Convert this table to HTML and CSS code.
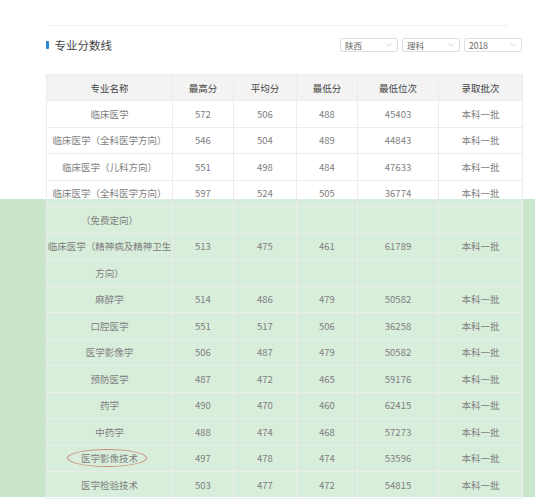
FILE: index.html
```html
<!DOCTYPE html>
<html lang="zh-CN">
<head>
<meta charset="utf-8">
<link rel="stylesheet" href="styles.css">
</head>
<body>
<div class="highlight"></div>
<div class="page">
  <div class="top-line"></div>
  <div class="bar">
    <div class="title"><span class="mark"></span>专业分数线</div>
    <div class="filters">
      <div class="select"><span>陕西</span><svg viewBox="0 0 8 5" class="chev"><path d="M0.5 0.5 L4 4 L7.5 0.5" fill="none" stroke="#c4c4c4" stroke-width="0.9"/></svg></div>
      <div class="select"><span>理科</span><svg viewBox="0 0 8 5" class="chev"><path d="M0.5 0.5 L4 4 L7.5 0.5" fill="none" stroke="#c4c4c4" stroke-width="0.9"/></svg></div>
      <div class="select"><span>2018</span><svg viewBox="0 0 8 5" class="chev"><path d="M0.5 0.5 L4 4 L7.5 0.5" fill="none" stroke="#c4c4c4" stroke-width="0.9"/></svg></div>
    </div>
  </div>
  <table class="scores">
    <colgroup>
      <col class="c1"><col class="c2"><col class="c3"><col class="c4"><col class="c5"><col class="c6">
    </colgroup>
    <thead>
      <tr><th>专业名称</th><th>最高分</th><th>平均分</th><th>最低分</th><th>最低位次</th><th>录取批次</th></tr>
    </thead>
    <tbody>
      <tr><td>临床医学</td><td>572</td><td>506</td><td>488</td><td>45403</td><td>本科一批</td></tr>
      <tr><td>临床医学（全科医学方向）</td><td>546</td><td>504</td><td>489</td><td>44843</td><td>本科一批</td></tr>
      <tr><td>临床医学（儿科方向）</td><td>551</td><td>498</td><td>484</td><td>47633</td><td>本科一批</td></tr>
      <tr><td>临床医学（全科医学方向）</td><td>597</td><td>524</td><td>505</td><td>36774</td><td>本科一批</td></tr>
      <tr><td>（免费定向）</td><td></td><td></td><td></td><td></td><td></td></tr>
      <tr><td>临床医学（精神病及精神卫生</td><td>513</td><td>475</td><td>461</td><td>61789</td><td>本科一批</td></tr>
      <tr><td>方向）</td><td></td><td></td><td></td><td></td><td></td></tr>
      <tr><td>麻醉学</td><td>514</td><td>486</td><td>479</td><td>50582</td><td>本科一批</td></tr>
      <tr><td>口腔医学</td><td>551</td><td>517</td><td>506</td><td>36258</td><td>本科一批</td></tr>
      <tr><td>医学影像学</td><td>506</td><td>487</td><td>479</td><td>50582</td><td>本科一批</td></tr>
      <tr><td>预防医学</td><td>487</td><td>472</td><td>465</td><td>59176</td><td>本科一批</td></tr>
      <tr><td>药学</td><td>490</td><td>470</td><td>460</td><td>62415</td><td>本科一批</td></tr>
      <tr><td>中药学</td><td>488</td><td>474</td><td>468</td><td>57273</td><td>本科一批</td></tr>
      <tr><td class="circled"><span class="ring"></span>医学影像技术</td><td>497</td><td>478</td><td>474</td><td>53596</td><td>本科一批</td></tr>
      <tr><td>医学检验技术</td><td>503</td><td>477</td><td>472</td><td>54815</td><td>本科一批</td></tr>
    </tbody>
  </table>
</div>
</body>
</html>
```

FILE: styles.css
```css
html, body {
  margin: 0;
  padding: 0;
  background: #ffffff;
}
body {
  position: relative;
  width: 535px;
  height: 500px;
  overflow: hidden;
  font-family: "Noto Sans CJK SC", "Noto Sans", sans-serif;
}
.highlight {
  position: absolute;
  left: 0;
  top: 199px;
  width: 535px;
  height: 298px;
  background: #c9e6cc;
  z-index: 0;
}
.page {
  position: relative;
  z-index: 1;
  margin-left: 46px;
  width: 476px;
  padding-top: 25px;
}
.top-line {
  width: 462px;
  border-top: 1px solid #f1f1f1;
}
.bar {
  margin-top: 12px;
  height: 14px;
  display: flex;
  align-items: center;
  justify-content: space-between;
}
.title {
  display: flex;
  align-items: center;
  font-size: 11.5px;
  color: #444;
  line-height: 14px;
}
.mark {
  display: inline-block;
  width: 2.5px;
  height: 8px;
  background: #2b86d6;
  border-radius: 1px;
  margin-right: 6px;
}
.filters {
  display: flex;
  gap: 4px;
}
.select {
  box-sizing: border-box;
  width: 58px;
  height: 14px;
  border: 1px solid #dedede;
  border-radius: 2px;
  display: flex;
  align-items: center;
  justify-content: space-between;
  padding: 0 5px 0 4px;
  font-size: 8.5px;
  color: #666;
  background: #fff;
}
.chev {
  width: 6px;
  height: 4px;
}
.scores {
  margin-top: 22px;
  width: 476px;
  border-collapse: collapse;
  table-layout: fixed;
  font-size: 9.5px;
}
.c1 { width: 126px; }
.c2 { width: 61px; }
.c3 { width: 63px; }
.c4 { width: 61px; }
.c5 { width: 81px; }
.c6 { width: 84px; }
.scores tr {
  height: 26.5px;
}
.scores thead tr {
  height: 26px;
}
.scores th, .scores td {
  border: 1px solid #ececec;
  text-align: center;
  padding: 0;
  line-height: 12px;
  white-space: nowrap;
}
.scores th {
  background: #f3f3f3;
  color: #444;
  font-weight: normal;
}
.scores td {
  color: #808080;
  background: rgba(255, 255, 255, 0.3);
}
.scores tbody tr:nth-child(-n+3) td {
  background: #fff;
}
.circled {
  position: relative;
}
.ring {
  position: absolute;
  left: 20px;
  top: 3px;
  width: 80px;
  height: 18px;
  box-sizing: border-box;
  border: 1.2px solid #c98c7c;
  border-radius: 50%;
}
```
